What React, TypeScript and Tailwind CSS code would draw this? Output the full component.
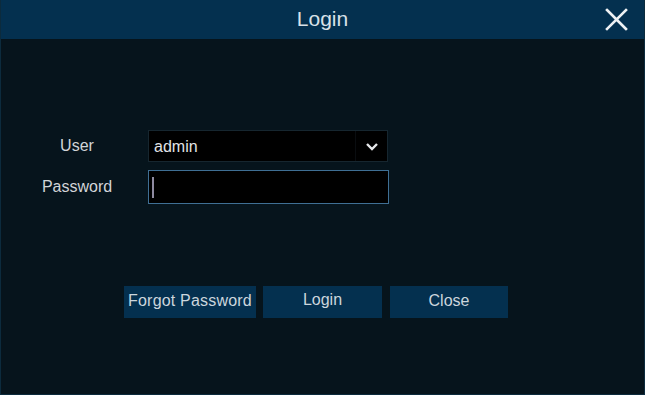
import { useState } from 'react';

export default function App() {
    const [user] = useState('admin');

    return (
        <div className="w-[645px] h-[395px] flex flex-col bg-[#06141c] border-x border-b border-[#0c2b3d] font-['Liberation_Sans',Arial,sans-serif] overflow-hidden">
            {/* title bar */}
            <div className="relative h-[39px] shrink-0 flex items-center justify-center bg-[#04304f]">
                <span className="text-[21px] leading-none text-[#d8e1e8] -mt-[3px]">Login</span>
                <button className="absolute left-[604px] top-[8px] w-[23px] h-[23px] flex items-center justify-center">
                    <svg width="23" height="23" viewBox="0 0 23 23" fill="none">
                        <path d="M2 2 L21 21 M21 2 L2 21" stroke="#eef1f4" strokeWidth="2.6" strokeLinecap="square" />
                    </svg>
                </button>
            </div>

            {/* form */}
            <div className="flex flex-col pt-[91px] gap-[8px]">
                <div className="flex items-center h-[32px]">
                    <label className="w-[100px] ml-[26px] text-center text-[16px] leading-none text-[#d2d5d8]">User</label>
                    <div className="ml-[21px] w-[240px] h-[32px] flex items-center bg-black border border-[#16262f]">
                        <span className="flex-1 pl-[5px] text-[16px] leading-none text-[#e2e4e6] pt-[1px]">{user}</span>
                        <div className="w-[32px] h-full flex items-center justify-center border-l border-[#0a0d10]">
                            <svg width="14" height="9" viewBox="0 0 14 9" fill="none">
                                <path d="M2 2 L7 7 L12 2" stroke="#e6e8ea" strokeWidth="2.4" />
                            </svg>
                        </div>
                    </div>
                </div>
                <div className="flex items-center h-[34px]">
                    <label className="w-[100px] ml-[26px] text-center text-[16px] leading-none text-[#d2d5d8]">Password</label>
                    <div className="ml-[21px] w-[241px] h-[34px] flex items-center bg-black border border-[#3f6f94]">
                        <span className="ml-[3px] w-[2px] h-[21px] bg-[#8e8aa0]" />
                    </div>
                </div>
            </div>

            {/* actions */}
            <div className="flex mt-[82px] ml-[123px]">
                <button className="w-[132px] h-[32px] bg-[#04304f] text-[16px] tracking-[0.2px] leading-none text-[#ccd6dd] pb-[3px]">Forgot Password</button>
                <button className="ml-[7px] w-[119px] h-[32px] bg-[#04304f] text-[16px] leading-none text-[#ccd6dd] pb-[4px]">Login</button>
                <button className="ml-[8px] w-[118px] h-[32px] bg-[#04304f] text-[16px] leading-none text-[#ccd6dd] pb-[3px]">Close</button>
            </div>
        </div>
    );
}
